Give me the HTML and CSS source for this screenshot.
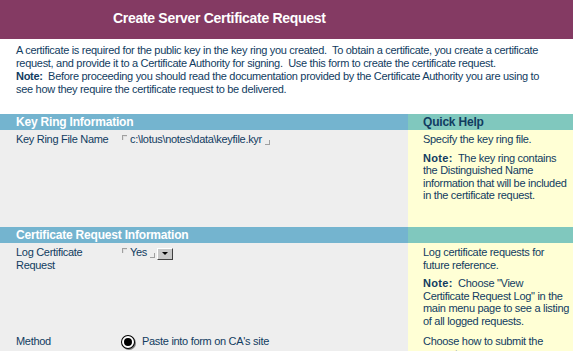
FILE: index.html
```html
<!DOCTYPE html>
<html lang="en">
<head>
    <meta charset="UTF-8">
    <title>Create Server Certificate Request</title>
    <link rel="stylesheet" href="styles.css">
</head>
<body>
    <header class="title-bar">
        <h1>Create Server Certificate Request</h1>
    </header>

    <div class="intro">
        <p>A certificate is required for the public key in the key ring you created.&nbsp; To obtain a certificate, you create a certificate request, and provide it to a Certificate Authority for signing.&nbsp; Use this form to create the certificate request.</p>
        <p><b>Note:</b>&nbsp; Before proceeding you should read the documentation provided by the Certificate Authority you are using to see how they require the certificate request to be delivered.</p>
    </div>

    <div class="form">
        <div class="sect">Key Ring Information</div>
        <div class="sect help-head">Quick Help</div>

        <div class="field row-keyring">
            <div class="label">Key Ring File Name</div>
            <div class="value"><span class="mark-start"></span>c:\lotus\notes\data\keyfile.kyr<span class="mark-end"></span></div>
        </div>
        <div class="help row-keyring">
            <p>Specify the key ring file.</p>
            <p><b>Note:</b>&nbsp; The key ring contains<br>the Distinguished Name<br>information that will be included<br>in the certificate request.</p>
        </div>

        <div class="sect">Certificate Request Information</div>
        <div class="sect help-head"></div>

        <div class="field row-log">
            <div class="label">Log Certificate Request</div>
            <div class="value"><span class="mark-start"></span>Yes<span class="mark-end"></span><span class="drop"></span></div>
        </div>
        <div class="help row-log">
            <p>Log certificate requests for<br>future reference.</p>
            <p><b>Note:</b>&nbsp; Choose "View<br>Certificate Request Log" in the<br>main menu page to see a listing<br>of all logged requests.</p>
        </div>

        <div class="field">
            <div class="label">Method</div>
            <div class="value"><span class="radio"></span>Paste into form on CA's site</div>
        </div>
        <div class="help">
            <p>Choose how to submit the<br>request.</p>
        </div>
    </div>
</body>
</html>
```

FILE: styles.css
```css
body {
    margin: 0;
    font-family: "Liberation Sans", Arial, sans-serif;
    font-size: 11px;
    line-height: 12.5px;
    letter-spacing: -0.3px;
    color: #113c61;
    background: #fff;
    overflow: hidden;
}

p {
    margin: 0;
}

.title-bar {
    background-color: #843a63;
    height: 39px;
    display: flex;
    align-items: center;
}

.title-bar h1 {
    margin: 0 0 2px 113px;
    font-size: 14px;
    letter-spacing: -0.3px;
    color: #fff;
    font-weight: bold;
}

.intro {
    padding: 5px 16px 0 16px;
    height: 70px;
    line-height: 13px;
}

.form {
    display: grid;
    grid-template-columns: 408px 165px;
}

.sect {
    background-color: #74b4cf;
    color: #fff;
    font-weight: bold;
    font-size: 12px;
    letter-spacing: -0.2px;
    height: 16px;
    line-height: 16px;
    padding-left: 16px;
}

.help-head {
    background-color: #80c8be;
    color: #113c61;
    padding-left: 15px;
}

.field {
    background-color: #eeeeee;
    display: flex;
    padding: 3px 0 0 16px;
}

.label {
    width: 100px;
    margin-right: 6px;
}

.value {
    display: flex;
    align-items: flex-start;
}

.help {
    background-color: #ffffd5;
    padding: 3px 0 0 15px;
    white-space: nowrap;
}

.help b {
    letter-spacing: 0.3px;
}

.help p + p {
    margin-top: 6px;
}

.row-keyring {
    height: 94px;
}

.row-log {
    height: 86px;
}

.mark-start,
.mark-end {
    display: inline-block;
    width: 4px;
    height: 4px;
    border: 1px solid #a0a0a0;
}

.mark-start {
    border-right: none;
    border-bottom: none;
    margin: 2px 3px 0 0;
    box-shadow: inset 1px 1px 0 #e0e0e0;
}

.mark-end {
    border-left: none;
    border-top: none;
    margin: 7px 0 0 3px;
}

.drop {
    display: inline-block;
    width: 14px;
    height: 10px;
    margin: 2px 0 0 2px;
    background: #c8c8c8;
    border: 1px solid;
    border-color: #fff #404040 #404040 #fff;
    position: relative;
}

.drop::after {
    content: "";
    position: absolute;
    left: 4px;
    top: 3px;
    border-left: 3px solid transparent;
    border-right: 3px solid transparent;
    border-top: 3px solid #000;
}

.radio {
    display: inline-block;
    width: 8px;
    height: 8px;
    border-radius: 50%;
    background: #000;
    border: 2px solid #fff;
    box-shadow: 0 0 0 1px #000, 1px 1px 0 1px #808080;
    margin: 1px 8px 0 0;
}
```
